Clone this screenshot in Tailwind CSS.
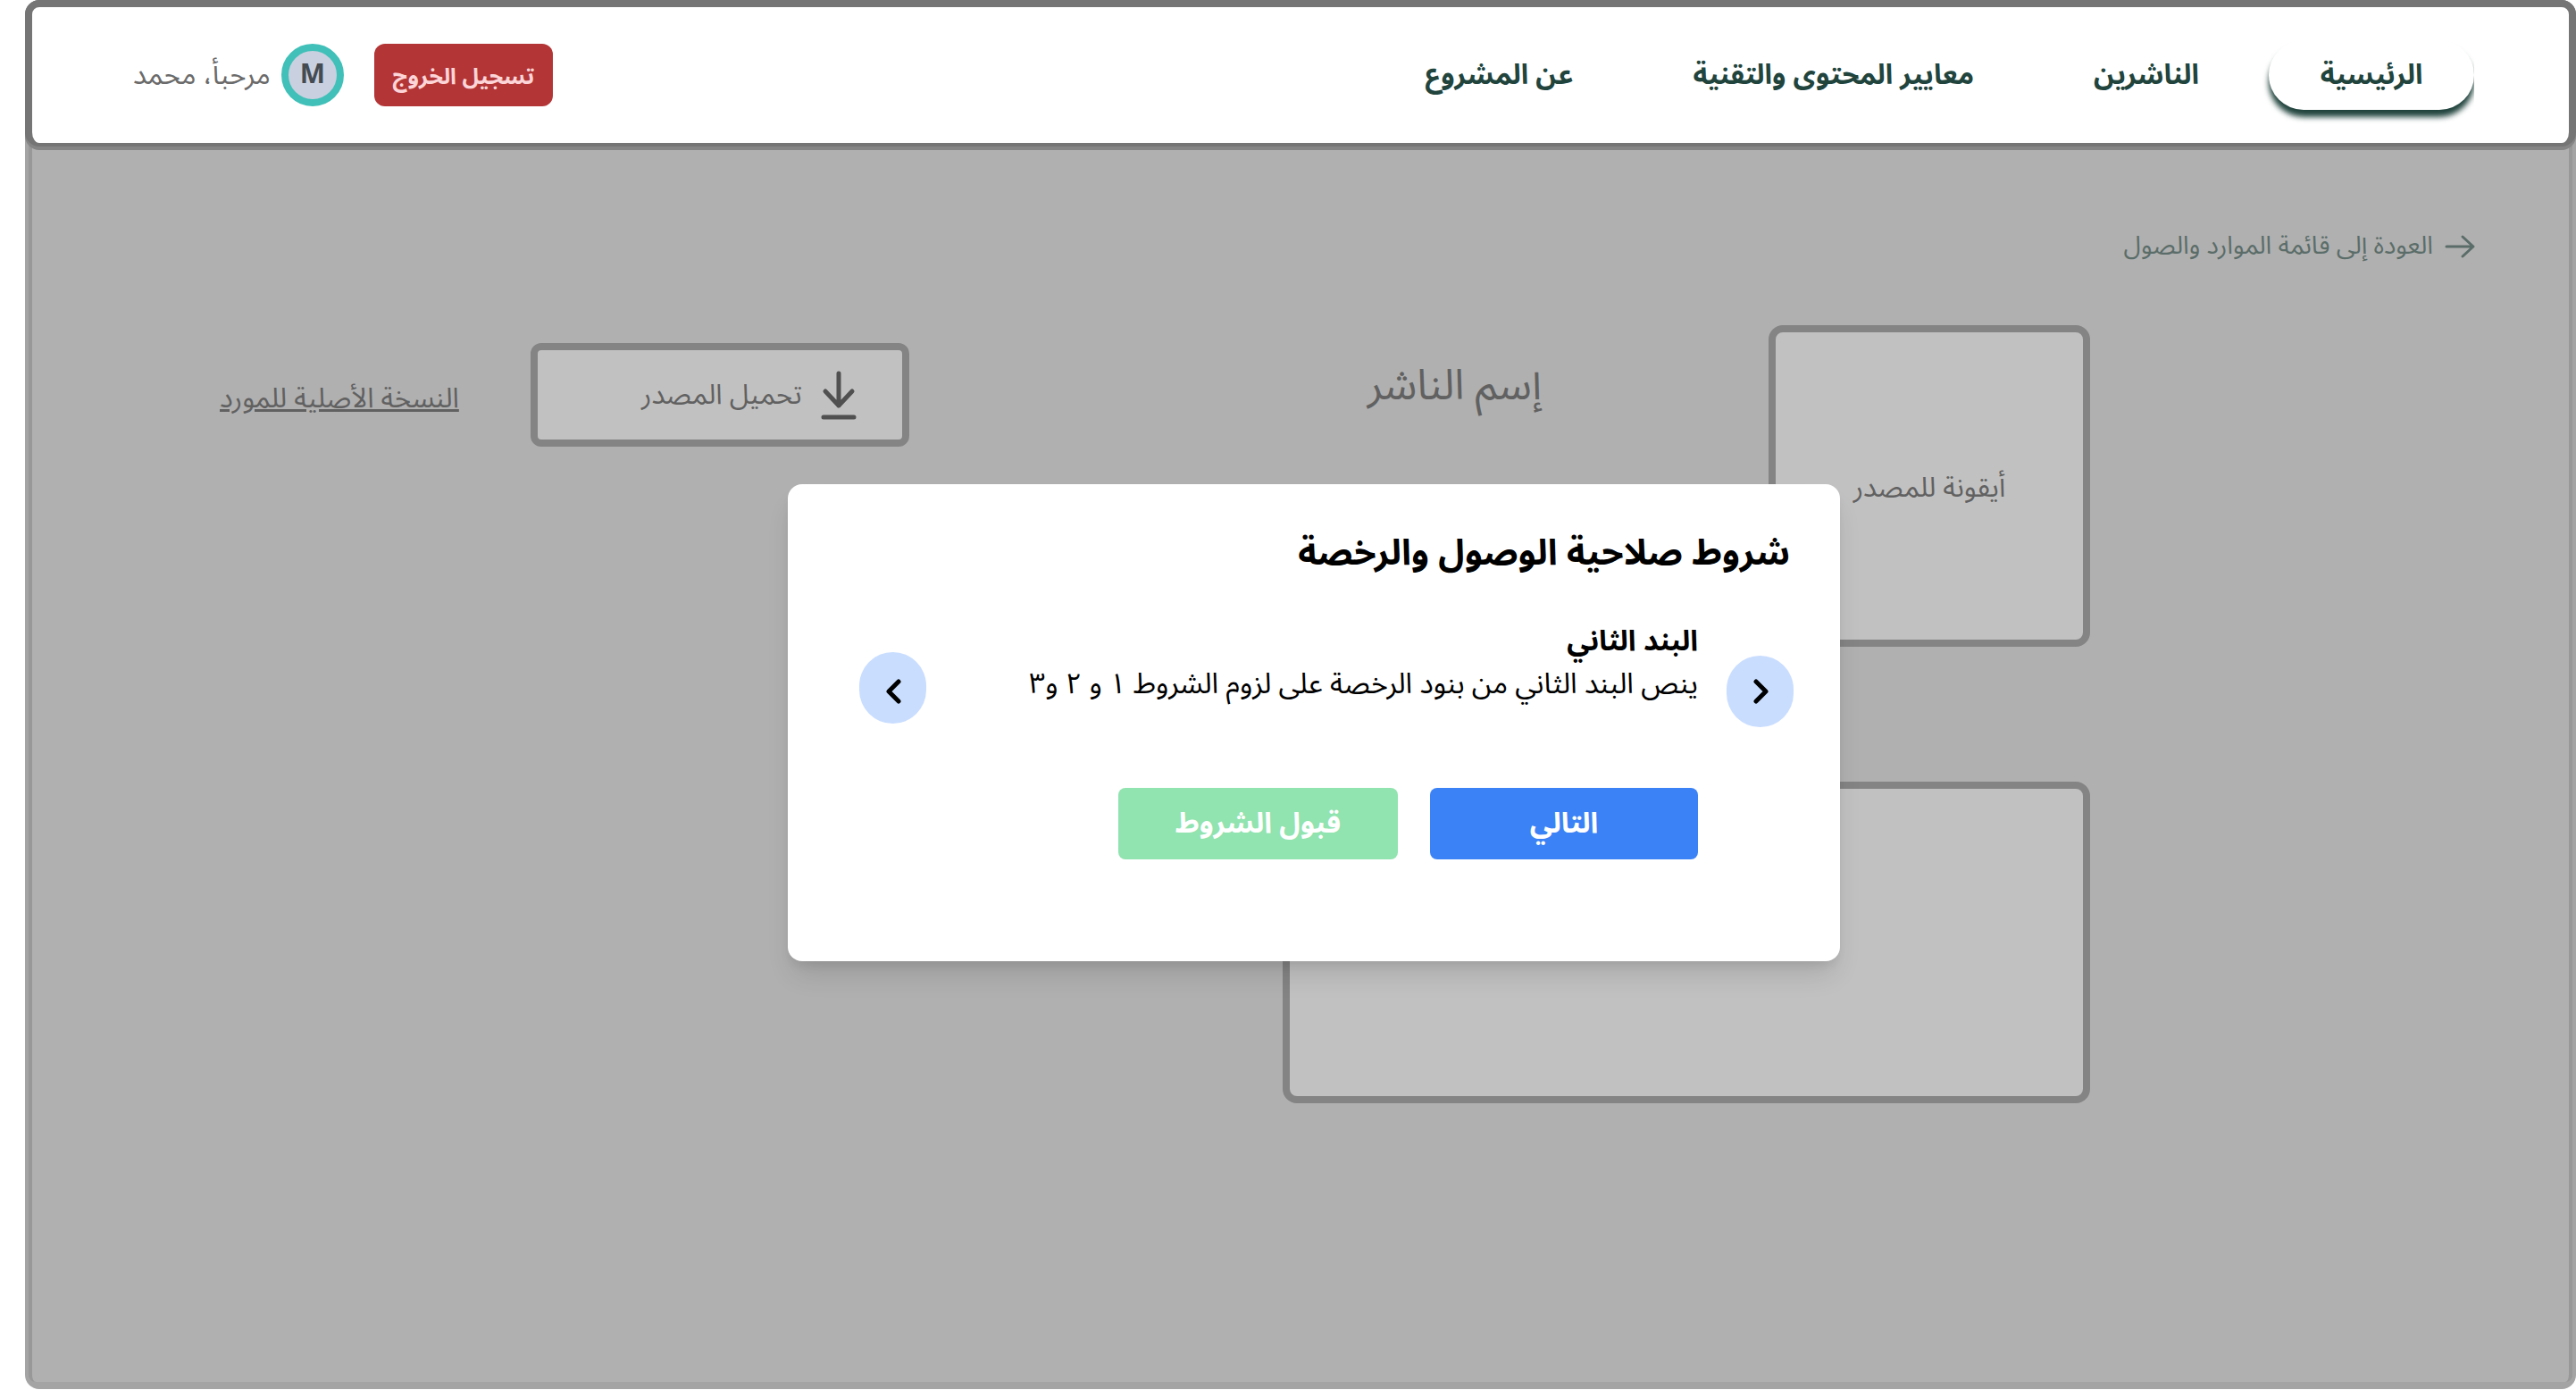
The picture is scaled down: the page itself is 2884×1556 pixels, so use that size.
<!DOCTYPE html>
<html lang="ar" dir="rtl">
<head>
<meta charset="utf-8">
<meta name="viewport" content="width=device-width, initial-scale=1">
<title>شروط صلاحية الوصول والرخصة</title>
<script src="https://cdn.jsdelivr.net/npm/@tailwindcss/browser@4"></script>
</head>
<body class="bg-white font-['Noto_Sans_Arabic','Noto_Sans',sans-serif]">
<div class="relative ml-7 flex min-h-screen flex-col pb-px">

  <!-- Site header -->
  <div class="relative z-10 rounded-2xl bg-[#858585] pb-1">
    <header class="flex items-center justify-between rounded-2xl border-8 border-b-4 border-[#757575] bg-white pt-[37px] pr-[106px] pb-[37px] pl-[113px]">
      <nav class="flex items-center gap-[78px] overflow-x-clip text-[31px] leading-[48px] font-bold text-[#21443d]">
        <a href="#" class="flex h-[78px] w-[230px] items-center justify-center rounded-[40px] bg-white shadow-[0_8px_6px_#21443d]">الرئيسية</a>
        <a href="#">الناشرين</a>
        <a href="#" class="mx-14">معايير المحتوى والتقنية</a>
        <a href="#">عن المشروع</a>
      </nav>
      <div class="flex items-center">
        <button class="ml-[34px] h-[70px] w-[200px] rounded-xl bg-[#b33536] pt-1 pl-0 pr-0 text-[25px] leading-10 font-bold text-[#fcd5d8]">تسجيل الخروج</button>
        <span class="ml-3 flex size-[70px] items-center justify-center rounded-full border-8 border-[#40c0b8] bg-[#c9d0df] text-[30px] leading-none font-bold text-[#444b53]">M</span>
        <span class="text-[31px] leading-10 text-[#6b6b6b]">مرحبأ، محمد</span>
      </div>
    </header>
  </div>

  <!-- Resource page -->
  <div class="-mt-4 flex grow rounded-b-2xl border-x-4 border-b-8 border-[#a4a4a4] bg-[#989898]">
    <main class="grow rounded-b-lg border-x-4 border-[#989898] bg-[#b0b0b0] pt-[104px] text-[#616161]">
      <a href="#" class="mr-26 inline-flex items-center gap-3 align-top text-[28px] leading-10 text-[#5b6d69]">
        <svg class="h-8 w-9" viewBox="0 0 36 32" fill="none" stroke="currentColor" stroke-width="3" stroke-linecap="round" stroke-linejoin="round"><path d="M3 16h29M21 5l12 11L21 27"/></svg>
        العودة إلى قائمة الموارد والصول
      </a>
      <div class="mt-[68px] flex items-start pr-[536px] pl-[210px]">
        <div class="flex size-[360px] items-center justify-center rounded-2xl border-8 border-[#848484] bg-[#c1c1c1] pt-1 text-[31px] leading-[48px]">أيقونة للمصدر</div>
        <h1 class="mt-8 mr-[254px] text-[47px] leading-[72px]">إسم الناشر</h1>
        <div class="mt-5 mr-auto flex items-center gap-20 text-[31px] leading-[48px]">
          <button class="flex h-[116px] w-[424px] items-center gap-5 rounded-xl border-8 border-[#848484] bg-[#c1c1c1] pr-[50px]">
            <svg class="h-14 w-[42px]" viewBox="0 0 42 56" fill="none" stroke="#505050" stroke-width="5" stroke-linecap="round" stroke-linejoin="round"><path d="M21 4v36M6 24l15 16 15-16M4 53h34"/></svg>
            تحميل المصدر
          </button>
          <a href="#" class="pt-2 underline">النسخة الأصلية للمورد</a>
        </div>
      </div>
      <div class="mt-[151px] mr-[536px] h-[360px] w-[904px] rounded-2xl border-8 border-[#848484] bg-[#c1c1c1]"></div>
    </main>
  </div>

  <!-- Licence terms dialog -->
  <div class="absolute inset-x-0 top-[542px] z-20 flex justify-center pl-[30px]">
    <section role="dialog" aria-labelledby="terms-title" class="w-[1178px] rounded-2xl bg-white px-[52px] pt-[42px] pb-[114px] text-[32px] leading-[48px] text-black shadow-[0_20px_30px_-6px_rgba(0,0,0,0.12),0_8px_12px_-4px_rgba(0,0,0,0.08)]">
      <h2 id="terms-title" class="pr-1 text-[40px] leading-[72px] font-bold">شروط صلاحية الوصول والرخصة</h2>
      <div class="mt-[38px] flex items-start">
        <button aria-label="السابق" class="mt-10 flex h-20 w-[75px] items-center justify-center rounded-[40px] bg-[#c9ddff]">
          <svg class="h-8 w-5" viewBox="0 0 20 32" fill="none" stroke="#000" stroke-width="5" stroke-linecap="round" stroke-linejoin="round"><path d="M5 5l11 11L5 27"/></svg>
        </button>
        <div class="mr-8 grow">
          <h3 class="font-bold">البند الثاني</h3>
          <p>ينص البند الثاني من بنود الرخصة على لزوم الشروط ١ و ٢ و٣</p>
        </div>
        <button aria-label="التالي" class="mt-9 ml-7 flex h-20 w-[75px] items-center justify-center rounded-[40px] bg-[#c9ddff] pt-2">
          <svg class="h-8 w-5" viewBox="0 0 20 32" fill="none" stroke="#000" stroke-width="5" stroke-linecap="round" stroke-linejoin="round"><path d="M16 5L5 16l11 11"/></svg>
        </button>
      </div>
      <div class="mt-[68px] mr-[107px] flex gap-9 font-bold text-white">
        <button class="h-20 w-[300px] rounded-lg bg-[#3b82f6]">التالي</button>
        <button class="h-20 w-[313px] rounded-lg bg-[#91e3af]">قبول الشروط</button>
      </div>
    </section>
  </div>
</div>
</body>
</html>
